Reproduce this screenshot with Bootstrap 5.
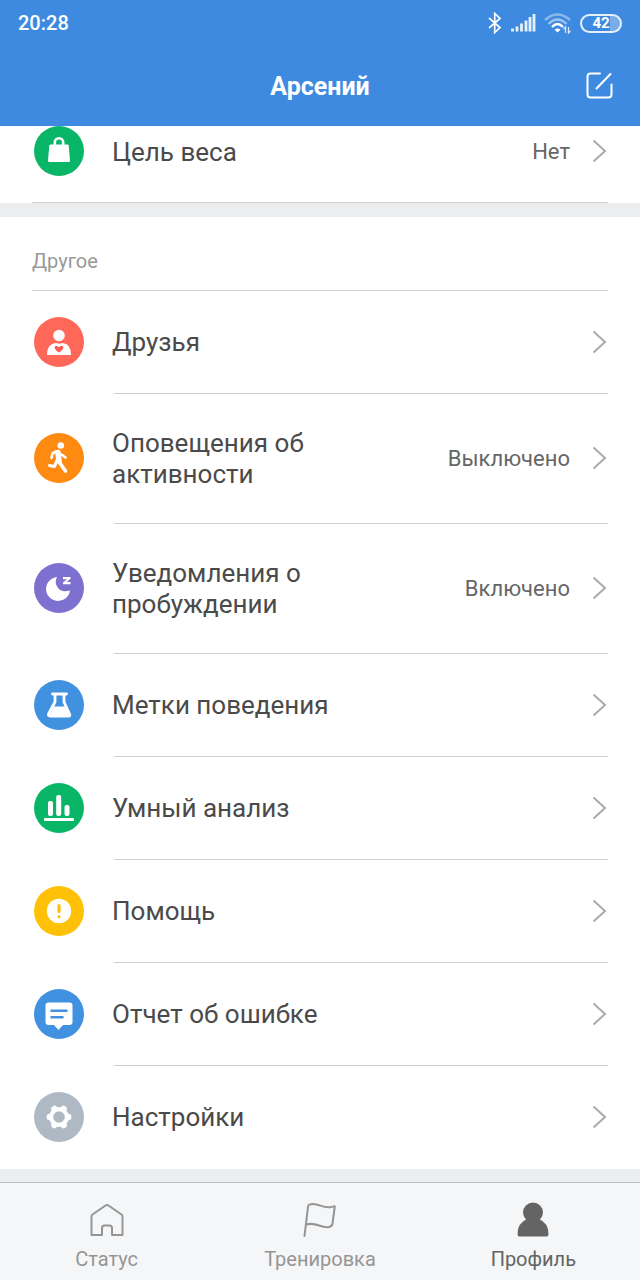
<!DOCTYPE html>
<html lang="ru">
<head>
<meta charset="utf-8">
<meta name="viewport" content="width=device-width, initial-scale=1">
<title>Профиль</title>
<link rel="stylesheet" href="https://cdn.jsdelivr.net/npm/bootstrap@5.3.0/dist/css/bootstrap.min.css">
<style>
  body { font-family: Roboto, "Noto Sans", sans-serif; color: #4a4a4a; background: #ecedef; }
  svg { display: block; flex: none; }
  .app-head { background: #3e8ae0; color: #fff; }
  .status-line { height: 46px; padding: 0 18px; font-size: 20px; font-weight: 500; }
  .status-line svg { fill: none; stroke: #fff; }
  .battery { width: 42px; height: 19px; border: 2px solid #e6f0fb; border-radius: 10px; font-size: 15px; font-weight: 700; line-height: 15px; background: linear-gradient(90deg, #3e8ae0 28px, #79adea 28px); }
  .title-bar { height: 80px; padding: 0 26px; }
  .title-bar h1 { font-size: 25px; line-height: 30px; font-weight: 700; padding-top: 2px; }
  .side { width: 28px; }
  .item { min-height: 103px; padding: 0 32px 2px 34px; gap: 28px; font-size: 26px; line-height: 31px; color: inherit; }
  .item.two-line { min-height: 130px; }
  .item.goal { min-height: 77px; padding-bottom: 27px; }
  .item::after { content: ""; position: absolute; left: 114px; right: 32px; bottom: 0; height: 1px; background: #cfcfcf; }
  .item.goal::after { left: 32px; }
  .item:last-child:not(.goal)::after { display: none; }
  .item-name { padding-top: 2px; }
  .item-value { font-size: 22px; color: #666; margin-right: -6px; padding-top: 1px; }
  .item-icon { width: 50px; height: 50px; }
  .chevron { width: 16px; height: 24px; fill: none; stroke: #aaa; stroke-width: 2; }
  .other { margin-top: 14px; }
  .section-name { margin: 0 32px; height: 74px; padding-top: 14px; font-size: 20px; line-height: 24px; color: #999; border-bottom: 1px solid #cfcfcf; }
  .tabs { background: #f5f6f8; border-top: 1px solid #bdbfc2; height: 98px; font-size: 20px; line-height: 24px; }
  .tabs a { color: #959595; padding-top: 18px; gap: 8px; }
  .tabs a.active { color: #646464; }
  .tabs svg { width: 38px; height: 38px; }
</style>
</head>
<body class="d-flex flex-column min-vh-100">
<svg class="d-none" aria-hidden="true"><symbol id="chev" viewBox="0 0 16 24"><path d="M1.500 1.500 13 12 1.500 22.500"/></symbol></svg>

<header class="app-head">
  <div class="status-line d-flex align-items-center justify-content-between">
    <span>20:28</span>
    <div class="d-flex align-items-center">
      <svg width="14" height="22" viewBox="0 0 14 22" stroke-width="1.700"><path d="M1 6 12 15.500 6.700 20.500V1.500L12 6.500 1 16"/></svg>
      <svg class="ms-2" width="26" height="20" viewBox="0 0 26 20" stroke-width="2.800"><path d="M2.500 18.500v-3M7 18.500v-5M11.500 18.500v-8M16 18.500V7.500M20 18.500V4M24 18.500V1" opacity=".88"/></svg>
      <svg class="ms-2" width="28" height="22" viewBox="0 0 28 22" stroke-width="2.400"><path d="M1 8Q13.500-3 26 8" opacity=".4"/><path d="M4.500 12Q13.500 3 22.500 12" opacity=".5"/><path d="M8 15Q13.500 9 19 15"/><path d="M10.500 17.500Q13.500 15.500 16.500 17.500L13.500 20.500Z" fill="#fff" stroke="none"/><path d="M21.500 21v-6l-2 2M24.500 15v6l2-2" stroke-width="1.300" opacity=".8"/></svg>
      <span class="battery ms-2 text-center">42</span>
    </div>
  </div>
  <div class="title-bar d-flex align-items-center justify-content-between">
    <span class="side"></span>
    <h1 class="m-0">Арсений</h1>
    <button type="button" class="side btn p-0 border-0" aria-label="Изменить"><svg width="28" height="28" viewBox="0 0 28 28" fill="none" stroke="#fff" stroke-width="2" stroke-linecap="round"><path d="M14 1.500H4.500Q1.500 1.500 1.500 4.500v18q0 3 3 3h18q3 0 3-3V12.500M10.500 16.500 24.500 2"/></svg></button>
  </div>
</header>

<main class="flex-grow-1">
  <section class="bg-white">
    <a href="#goal" class="item goal position-relative d-flex align-items-center text-decoration-none">
      <svg class="item-icon" viewBox="0 0 50 50"><circle cx="25" cy="25" r="25" fill="#09b566"/><path d="M16.500 18.500h17q1 0 1.200 1l1.300 15q0 1.500-1.500 1.500h-19q-1.500 0-1.500-1.500l1.300-15q.200-1 1.200-1z" fill="#fff"/><path d="M20.800 19v-2.500a4.200 4.200 0 0 1 8.400 0V19" fill="none" stroke="#fff" stroke-width="2.600"/></svg>
      <span class="item-name flex-fill">Цель веса</span><span class="item-value text-nowrap">Нет</span><svg class="chevron"><use href="#chev"/></svg>
    </a>
  </section>

  <section class="other bg-white">
    <h2 class="section-name d-flex align-items-center mb-0 fw-normal">Другое</h2>
    <nav>
    <a href="#friends" class="item position-relative d-flex align-items-center text-decoration-none">
      <svg class="item-icon" viewBox="0 0 50 50"><circle cx="25" cy="25" r="25" fill="#ff6759"/><circle cx="25" cy="18.500" r="5.800" fill="#fff"/><path d="M13 38q0-11.500 9.500-12 3 1.500 6 0Q37 26.500 37 38z" fill="#fff"/><path d="M25 35.500c-8-5.500-3-8.500 0-5.300 3-3.200 8-.200 0 5.300z" fill="#ff5a50"/></svg>
      <span class="item-name flex-fill">Друзья</span><svg class="chevron"><use href="#chev"/></svg>
    </a>
    <a href="#activity" class="item two-line position-relative d-flex align-items-center text-decoration-none">
      <svg class="item-icon" viewBox="0 0 50 50"><circle cx="25" cy="25" r="25" fill="#ff8a12"/><circle cx="26.800" cy="12.500" r="3.300" fill="#fff"/><g fill="none" stroke="#fff" stroke-linecap="round" stroke-linejoin="round"><path d="M24 19.500 25 28" stroke-width="5.500"/><path d="M25.500 29.500 31.500 38" stroke-width="3.600"/><path d="M23 27.500 20.500 33.500 15.500 32.500" stroke-width="3.200"/><path d="M22 18.500 18.500 20.500 17.500 25M27.500 21.500 31.500 24.500" stroke-width="2.600"/></g></svg>
      <span class="item-name flex-fill">Оповещения об активности</span><span class="item-value text-nowrap">Выключено</span><svg class="chevron"><use href="#chev"/></svg>
    </a>
    <a href="#wake" class="item two-line position-relative d-flex align-items-center text-decoration-none">
      <svg class="item-icon" viewBox="0 0 50 50"><circle cx="25" cy="25" r="25" fill="#7e70cf"/><path d="M23 14A12 12 0 1 0 36 27.500Q28 30 24 25 20 20 23 14Z" fill="#fff"/><path d="M29 14h7.500v1.800L32.500 19h4v2.300H29v-1.800l4-3.200h-4z" fill="#fff"/></svg>
      <span class="item-name flex-fill">Уведомления о пробуждении</span><span class="item-value text-nowrap">Включено</span><svg class="chevron"><use href="#chev"/></svg>
    </a>
    <a href="#tags" class="item position-relative d-flex align-items-center text-decoration-none">
      <svg class="item-icon" viewBox="0 0 50 50"><circle cx="25" cy="25" r="25" fill="#4191e1"/><path d="M18.500 14h14M21 14.500V22L14.500 34Q14 36 16 36h18.500Q36.500 36 35.500 34L30 22v-7.500" fill="none" stroke="#fff" stroke-width="2.800" stroke-linecap="round" stroke-linejoin="round"/><path d="M20 26.500h11l5 9.500H15z" fill="#fff"/></svg>
      <span class="item-name flex-fill">Метки поведения</span><svg class="chevron"><use href="#chev"/></svg>
    </a>
    <a href="#analysis" class="item position-relative d-flex align-items-center text-decoration-none">
      <svg class="item-icon" viewBox="0 0 50 50"><circle cx="25" cy="25" r="25" fill="#09b566"/><g fill="#fff"><rect x="14" y="18" width="5" height="15" rx="2"/><rect x="22.200" y="12" width="5" height="21" rx="2"/><rect x="30.500" y="22" width="5" height="11" rx="2"/><rect x="10" y="35" width="30" height="3" rx="1"/></g></svg>
      <span class="item-name flex-fill">Умный анализ</span><svg class="chevron"><use href="#chev"/></svg>
    </a>
    <a href="#help" class="item position-relative d-flex align-items-center text-decoration-none">
      <svg class="item-icon" viewBox="0 0 50 50"><circle cx="25" cy="25" r="25" fill="#ffc107"/><circle cx="25" cy="25" r="12.200" fill="#fff"/><path d="M25 19.500v6M25 30.700v.100" stroke="#ffc107" stroke-width="3.200" stroke-linecap="round"/></svg>
      <span class="item-name flex-fill">Помощь</span><svg class="chevron"><use href="#chev"/></svg>
    </a>
    <a href="#report" class="item position-relative d-flex align-items-center text-decoration-none">
      <svg class="item-icon" viewBox="0 0 50 50"><circle cx="25" cy="25" r="25" fill="#4191e1"/><path d="M14.500 13.500h21q3 0 3 3V33q0 3-3 3H29l-4.500 5-4.500-5h-5.500q-3 0-3-3V16.500q0-3 3-3z" fill="#fff"/><path d="M17.500 21.700h15M17.500 28.200h11" stroke="#4191e1" stroke-width="2.600" stroke-linecap="round"/></svg>
      <span class="item-name flex-fill">Отчет об ошибке</span><svg class="chevron"><use href="#chev"/></svg>
    </a>
    <a href="#settings" class="item position-relative d-flex align-items-center text-decoration-none">
      <svg class="item-icon" viewBox="0 0 50 50"><circle cx="25" cy="25" r="25" fill="#aeb9c3"/><circle cx="25" cy="25" r="10" fill="#fff"/><path d="M15 25h20M20 16.300l10 17.400M30 16.300 20 33.700" stroke="#fff" stroke-width="7" stroke-linecap="round" transform="translate(2 2) scale(.92)"/><circle cx="25" cy="25" r="5.800" fill="#aeb9c3"/></svg>
      <span class="item-name flex-fill">Настройки</span><svg class="chevron"><use href="#chev"/></svg>
    </a>
    </nav>
  </section>
</main>

<nav class="tabs d-flex sticky-bottom">
  <a href="#status" class="col d-flex flex-column align-items-center text-decoration-none"><svg viewBox="0 0 38 38" fill="none" stroke="currentColor" stroke-width="2" stroke-linejoin="round"><path d="M3.500 15.500Q3.500 14.300 4.500 13.500L17.500 4.500Q19 3.500 20.500 4.500L33.500 13.500Q34.500 14.300 34.500 15.500V34H24V27q0-2.500-2.500-2.500h-5Q14 24.500 14 27v7H3.500Z"/></svg>Статус</a>
  <a href="#training" class="col d-flex flex-column align-items-center text-decoration-none"><svg viewBox="0 0 38 38" fill="none" stroke="currentColor" stroke-width="2" stroke-linecap="round" stroke-linejoin="round"><path d="M3.500 35 7 6Q7.300 3.500 9.500 3.200C18 1.800 21 7.500 30 6Q34 5 33.800 5.500L31.500 22.500Q31 25.500 28 26C19 27.500 16 20.500 5.300 23.500"/></svg>Тренировка</a>
  <a href="#profile" class="active col d-flex flex-column align-items-center text-decoration-none" aria-current="page"><svg viewBox="0 0 38 38" fill="currentColor"><circle cx="19" cy="11.500" r="10"/><path d="M13 18Q3.500 22 3.500 33q0 2.500 2 2.500h27q2 0 2-2.500Q34.500 22 25 18Z"/></svg>Профиль</a>
</nav>
<script src="https://cdn.jsdelivr.net/npm/bootstrap@5.3.0/dist/js/bootstrap.bundle.min.js"></script>
</body>
</html>
